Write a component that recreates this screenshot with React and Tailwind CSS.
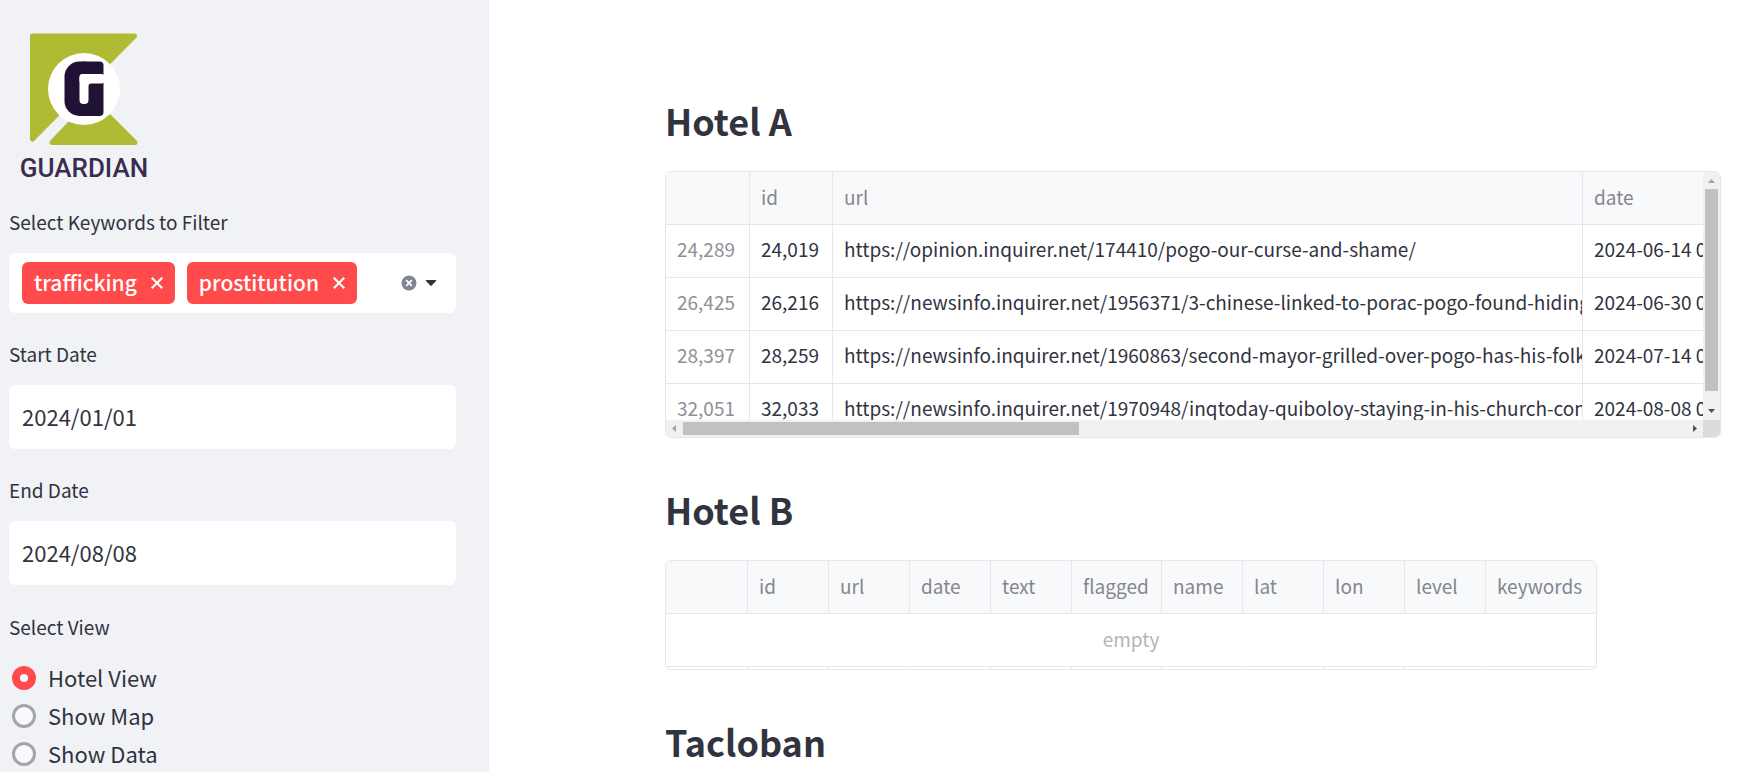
import { useState } from "react";

const articles = [
  ["24,289", "24,019", "https://opinion.inquirer.net/174410/pogo-our-curse-and-shame/", "2024-06-14 00:00:00"],
  ["26,425", "26,216", "https://newsinfo.inquirer.net/1956371/3-chinese-linked-to-porac-pogo-found-hiding", "2024-06-30 00:00:00"],
  ["28,397", "28,259", "https://newsinfo.inquirer.net/1960863/second-mayor-grilled-over-pogo-has-his-folks", "2024-07-14 00:00:00"],
  ["32,051", "32,033", "https://newsinfo.inquirer.net/1970948/inqtoday-quiboloy-staying-in-his-church-com", "2024-08-08 00:00:00"],
];

const emptyColumns = ["id", "url", "date", "text", "flagged", "name", "lat", "lon", "level", "keywords"];

function Logo() {
  return (
    <svg viewBox="0 0 150 184" className="block h-[184px] w-[150px]" role="img" aria-label="Guardian">
      <g fill="#afbb33" stroke="#afbb33" strokeWidth="5" strokeLinejoin="round">
        <path d="M32.500 36H134.500L32.500 139Z" />
        <path d="M52 142.500H135L92.500 100Z" />
      </g>
      <circle cx="84" cy="89" r="36" fill="#fff" />
      <rect x="64.500" y="61.500" width="34" height="54.500" rx="15" fill="#1f1235" />
      <rect x="80" y="61.500" width="23.500" height="54.500" rx="4" fill="#1f1235" />
      <rect x="79.500" y="74" width="25" height="9.500" rx="3" fill="#fff" />
      <rect x="79.500" y="74" width="9" height="30" rx="4" fill="#fff" />
      <path d="M88 87V83H92Q88 83.500 88 87Z" fill="#fff" />
      <text x="84" y="177" textAnchor="middle" fontFamily="Roboto, sans-serif" fontSize="26" fontWeight="500" fill="#3a2c50">
        GUARDIAN
      </text>
    </svg>
  );
}

function Tag({ children, onRemove }) {
  return (
    <span className="flex h-[42px] items-center gap-3.5 rounded-md bg-[#ff4b4b] px-3 text-[21px] leading-6 font-medium text-white">
      <span className="pb-0.5">{children}</span>
      <button type="button" aria-label={`Remove ${children}`} onClick={onRemove}>
        <svg viewBox="0 0 12 12" className="block size-3" fill="none" stroke="#fff" strokeWidth="2.200">
          <path d="M.800 .800L11.200 11.200M11.200 .800L.800 11.200" />
        </svg>
      </button>
    </span>
  );
}

function DateField({ id, label, initial }) {
  return (
    <div className="mt-[30px]">
      <label htmlFor={id} className="block text-[19px] leading-[22px]">{label}</label>
      <input
        id={id}
        type="text"
        defaultValue={initial}
        className="mt-5 block h-16 w-full rounded-md bg-white px-[13px] pb-0.5 text-[22px] leading-8 outline-none"
      />
    </div>
  );
}

function Sidebar() {
  const [tags, setTags] = useState(["trafficking", "prostitution"]);
  const [view, setView] = useState("Hotel View");
  return (
    <aside className="w-[489px] shrink-0 bg-[#f0f2f6] pr-[33px] pl-[9px]">
      <div className="-ml-[9px]">
        <Logo />
      </div>
      <div className="mt-[27px]" role="group" aria-labelledby="keywords-label">
        <div id="keywords-label" className="text-[19px] leading-[22px]">Select Keywords to Filter</div>
        <div className="mt-5 flex h-[60px] items-center gap-3 rounded-md bg-white pr-[19px] pl-[13px]">
          {tags.map((tag) => (
            <Tag key={tag} onRemove={() => setTags(tags.filter((t) => t !== tag))}>{tag}</Tag>
          ))}
          <button type="button" aria-label="Clear all" className="ml-auto" onClick={() => setTags([])}>
            <svg viewBox="0 0 16 16" className="block size-4">
              <circle cx="8" cy="8" r="7.500" fill="#808495" />
              <path d="M5.200 5.200L10.800 10.800M10.800 5.200L5.200 10.800" stroke="#fff" strokeWidth="1.700" />
            </svg>
          </button>
          <button type="button" aria-label="Open keywords" className="-ml-1">
            <svg viewBox="0 0 12 8" className="block h-2 w-3">
              <path d="M1 1H11Q11.500 1.500 11 2L6.700 6.500Q6 7.100 5.300 6.500L1 2Q.500 1.500 1 1Z" fill="#31333f" />
            </svg>
          </button>
        </div>
      </div>
      <DateField id="start-date" label="Start Date" initial="2024/01/01" />
      <DateField id="end-date" label="End Date" initial="2024/08/08" />
      <fieldset className="mt-[30px]">
        <legend className="text-[19px] leading-6">Select View</legend>
        <div className="mt-5">
          {["Hotel View", "Show Map", "Show Data"].map((name) => (
            <label key={name} className="flex h-[38px] items-center gap-3 pl-[3px] text-[22px] leading-8">
              <input
                type="radio"
                name="view"
                checked={view === name}
                onChange={() => setView(name)}
                className="size-6 appearance-none rounded-full border-3 border-[#a3a5ae] bg-[#f9f9fb] checked:border-8 checked:border-[#ff4b4b]"
              />
              <span className="pb-0.5">{name}</span>
            </label>
          ))}
        </div>
      </fieldset>
    </aside>
  );
}

function Heading({ children }) {
  return <h3 className="text-[36px] leading-[48px] font-bold">{children}</h3>;
}

function ArticlesTable() {
  const cell = "overflow-hidden border-r border-b border-[#e6e7ea] px-[11px] text-left font-normal whitespace-nowrap";
  return (
    <div className="grid grid-cols-[minmax(0,1fr)_17px] overflow-hidden rounded-md border border-[#e6e7ea]">
      <div className="h-[248px] overflow-hidden">
        <table className="w-[1150px] table-fixed border-separate border-spacing-0 text-[19px] leading-6">
          <colgroup>
            <col className="w-[84px]" />
            <col className="w-[83px]" />
            <col className="w-[750px]" />
            <col />
          </colgroup>
          <thead>
            <tr className="h-[53px] bg-[#f8f9fb] text-[#84868f]">
              <th scope="col" aria-label="index" className={cell} />
              <th scope="col" className={`${cell} pb-0.5`}>id</th>
              <th scope="col" className={`${cell} pb-0.5`}>url</th>
              <th scope="col" className={`${cell} pb-0.5`}>date</th>
            </tr>
          </thead>
          <tbody>
            {articles.map(([index, id, url, date]) => (
              <tr key={index} className="h-[53px]">
                <th scope="row" className={`${cell} pb-1 text-[#8e9097]`}>{index}</th>
                <td className={`${cell} pb-1`}>{id}</td>
                <td className={`${cell} pb-1`}>{url}</td>
                <td className={`${cell} pb-1`}>{date}</td>
              </tr>
            ))}
          </tbody>
        </table>
      </div>
      <div className="flex flex-col items-center bg-[#f1f1f1]" aria-hidden="true">
        <svg viewBox="0 0 17 17" className="block size-[17px]"><path d="M5 11H12L8.500 7Z" fill="#a3a3a3" /></svg>
        <div className="h-[202px] w-[13px] bg-[#c1c1c1]" />
        <svg viewBox="0 0 17 17" className="mt-auto block size-[17px]"><path d="M5 6H12L8.500 10Z" fill="#505050" /></svg>
      </div>
      <div className="flex h-[17px] items-center bg-[#f1f1f1]" aria-hidden="true">
        <svg viewBox="0 0 17 17" className="block size-[17px]"><path d="M10 5V12L6 8.500Z" fill="#a3a3a3" /></svg>
        <div className="h-[13px] w-[396px] bg-[#c1c1c1]" />
        <svg viewBox="0 0 17 17" className="ml-auto block size-[17px]"><path d="M7 5V12L11 8.500Z" fill="#505050" /></svg>
      </div>
      <div className="bg-[#dcdcdc]" />
    </div>
  );
}

function EmptyTable() {
  const line = "border-r border-[#e6e7ea] last:border-r-0";
  return (
    <div className="w-[932px] overflow-hidden rounded-md border border-[#e6e7ea]">
      <table className="w-full table-fixed border-separate border-spacing-0 text-[19px] leading-6">
        <colgroup>
          <col className="w-[82px]" />
          <col className="w-[81px]" />
          <col className="w-[81px]" />
          <col className="w-[81px]" />
          <col className="w-[81px]" />
          <col className="w-[90px]" />
          <col className="w-[81px]" />
          <col className="w-[81px]" />
          <col className="w-[81px]" />
          <col className="w-[81px]" />
          <col />
        </colgroup>
        <thead>
          <tr className="h-[53px] bg-[#f8f9fb] text-[#84868f]">
            <th scope="col" aria-label="index" className={`${line} border-b`} />
            {emptyColumns.map((name) => (
              <th key={name} scope="col" className={`${line} border-b px-[11px] pb-0.5 text-left font-normal`}>{name}</th>
            ))}
          </tr>
        </thead>
        <tbody>
          <tr className="h-[53px]">
            <td colSpan={11} className="border-b border-[#e6e7ea] pb-0.5 text-center text-[#b3b4ba]">empty</td>
          </tr>
          <tr className="h-0.5" aria-hidden="true">
            <td className={line} />
            {emptyColumns.map((name) => (
              <td key={name} className={line} />
            ))}
          </tr>
        </tbody>
      </table>
    </div>
  );
}

export default function App() {
  return (
    <div className="flex min-h-screen bg-white font-['Noto_Sans_CJK_SC','Noto_Sans',sans-serif] text-[#31333f]">
      <Sidebar />
      <main className="min-w-0 flex-1 pt-24 pr-7 pl-[176px]">
        <section>
          <Heading>Hotel A</Heading>
          <div className="mt-[27px]"><ArticlesTable /></div>
        </section>
        <section className="mt-[47px]">
          <Heading>Hotel B</Heading>
          <div className="mt-[27px]"><EmptyTable /></div>
        </section>
        <section className="mt-[47px]">
          <Heading>Tacloban</Heading>
        </section>
      </main>
    </div>
  );
}
